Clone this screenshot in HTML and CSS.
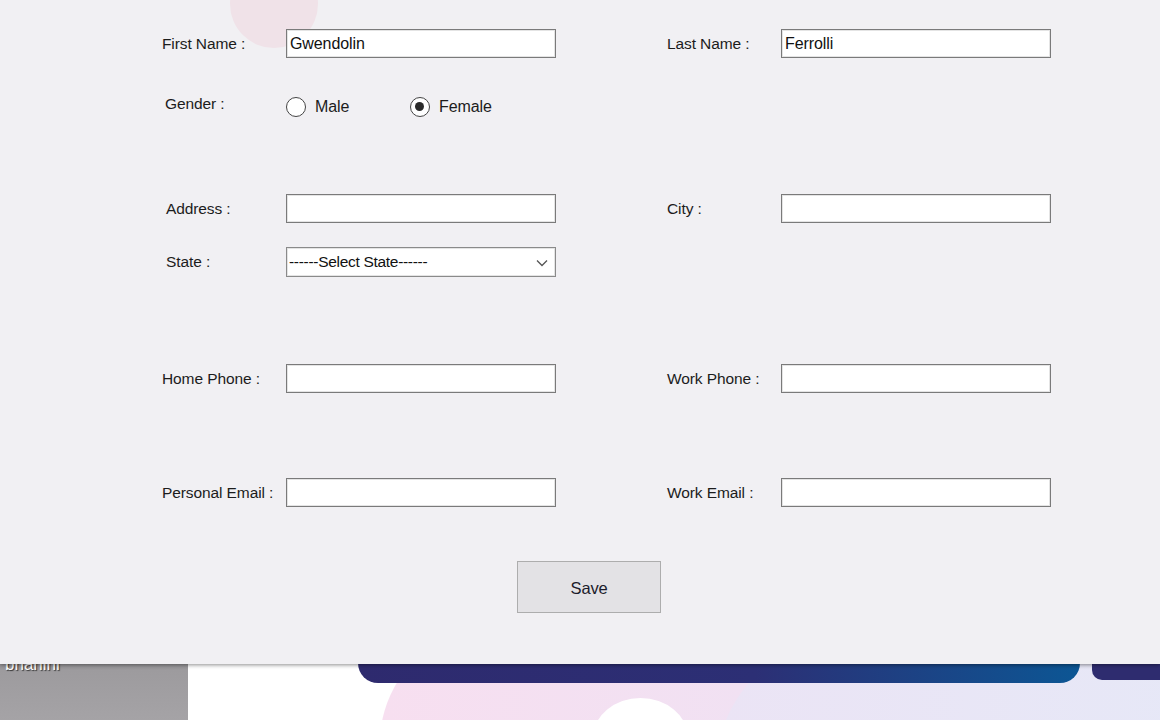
FILE: index.html
```html
<!DOCTYPE html>
<html>
<head>
<meta charset="utf-8">
<link rel="stylesheet" href="styles.css">
</head>
<body>
<div class="screen">
  <div class="backdrop">
    <div class="side"><span class="side-text">bhanini</span></div>
    <div class="canvas">
      <div class="wave wave-a"></div>
      <div class="wave wave-b"></div>
      <div class="wave wave-c"></div>
      <div class="bar"></div>
      <div class="bar2"></div>
    </div>
  </div>
  <div class="panel">
    <div class="blob"></div>
    <div class="row r1">
      <label class="lbl">First Name :</label>
      <div class="field">Gwendolin</div>
      <span></span>
      <label class="lbl">Last Name :</label>
      <div class="field">Ferrolli</div>
    </div>
    <div class="row r2">
      <label class="lbl ind3">Gender :</label>
      <div class="radios">
        <span class="radio"><span class="dot"></span>Male</span>
        <span class="radio on"><span class="dot"></span>Female</span>
      </div>
    </div>
    <div class="row r3">
      <label class="lbl ind4">Address :</label>
      <div class="field"></div>
      <span></span>
      <label class="lbl">City :</label>
      <div class="field"></div>
    </div>
    <div class="row r4">
      <label class="lbl ind4">State :</label>
      <div class="field select">------Select State------
        <svg class="chev" width="12" height="8" viewBox="0 0 12 8"><path d="M1 1.5 L6 6.5 L11 1.5" fill="none" stroke="#555" stroke-width="1.3"/></svg>
      </div>
    </div>
    <div class="row r5">
      <label class="lbl">Home Phone :</label>
      <div class="field"></div>
      <span></span>
      <label class="lbl">Work Phone :</label>
      <div class="field"></div>
    </div>
    <div class="row r6">
      <label class="lbl">Personal Email :</label>
      <div class="field"></div>
      <span></span>
      <label class="lbl">Work Email :</label>
      <div class="field"></div>
    </div>
    <div class="actions">
      <button class="save">Save</button>
    </div>
  </div>
</div>
</body>
</html>
```
FILE: styles.css
```css
* { box-sizing: border-box; }
html, body { margin: 0; padding: 0; }
body {
  width: 1160px;
  height: 720px;
  overflow: hidden;
  font-family: "Liberation Sans", Arial, sans-serif;
  background: #fff;
}
.screen { position: relative; width: 1160px; height: 720px; }

.panel {
  position: relative;
  z-index: 2;
  height: 664px;
  background: #f1f0f3;
  padding-top: 29px;
  box-shadow: 0 1px 4px rgba(0,0,0,0.45);
  overflow: hidden;
}
.blob {
  position: absolute;
  left: 230px;
  top: -40px;
  width: 88px;
  height: 88px;
  border-radius: 50%;
  background: #f0e2e8;
}
.row {
  position: relative;
  display: grid;
  grid-template-columns: 124px 270px 111px 114px 270px;
  margin-left: 162px;
  align-items: center;
  height: 29px;
}
.r2 { margin-top: 34px; }
.r3 { margin-top: 73px; }
.r4 { margin-top: 24px; height: 30px; }
.r5 { margin-top: 87px; }
.r6 { margin-top: 85px; }

.lbl {
  font-size: 15.5px;
  color: #1c1c1c;
  letter-spacing: -0.1px;
  white-space: nowrap;
}
.ind3 { padding-left: 3px; margin-top: -5px; }
.ind4 { padding-left: 4px; }

.field {
  height: 100%;
  background: #fff;
  border: 1px solid #7a7a7a;
  box-shadow: inset 0 0 0 1px #e4e4e4;
  font-size: 16px;
  letter-spacing: -0.1px;
  color: #111;
  padding-left: 3px;
  display: flex;
  align-items: center;
}
.select {
  position: relative;
  border-color: #8a8a8a;
  padding-left: 2px;
  font-size: 15.5px;
  letter-spacing: -0.3px;
}
.chev { position: absolute; right: 7px; top: 11px; }

.radios {
  display: flex;
  grid-column: 2 / 4;
  font-size: 16px;
  color: #1c1c1c;
  letter-spacing: -0.1px;
}
.radio { display: flex; align-items: center; width: 124px; }
.dot {
  width: 20px;
  height: 20px;
  border-radius: 50%;
  border: 1.5px solid #444;
  background: #fff;
  margin-right: 9px;
  position: relative;
}
.radio.on .dot::after {
  content: "";
  position: absolute;
  left: 4px;
  top: 4px;
  width: 9px;
  height: 9px;
  border-radius: 50%;
  background: #2a2a2a;
}

.actions { display: flex; margin-top: 54px; padding-left: 517px; }
.save {
  width: 144px;
  height: 52px;
  background: #e3e2e5;
  border: 1px solid #adadad;
  font-family: "Liberation Sans", Arial, sans-serif;
  font-size: 16.5px;
  color: #1c1c2c;
  letter-spacing: -0.2px;
  padding: 3px 0 0 0;
}

.backdrop {
  position: absolute;
  left: 0; top: 0;
  width: 1160px; height: 720px;
  display: flex;
  z-index: 1;
}
.side {
  width: 188px;
  height: 720px;
  background: linear-gradient(#8f8d90 655px, #9d9b9e 670px, #a5a3a6 720px);
  position: relative;
}
.side-text {
  position: absolute;
  left: 5px;
  top: 655px;
  font-size: 17px;
  color: #fff;
  text-shadow: 1px 1px 1px #333;
}
.canvas {
  position: relative;
  flex: 1;
  background: #fff;
  overflow: hidden;
}
.wave {
  position: absolute;
  border-radius: 50%;
}
.wave-a {
  left: 192px; top: 580px;
  width: 540px; height: 360px;
  background: linear-gradient(90deg, #f7dff0, #eee2f4);
  border-radius: 45% 45% 50% 50%;
}
.wave-b {
  left: 530px; top: 600px;
  width: 500px; height: 320px;
  background: linear-gradient(90deg, #ebe4f5, #e6e8f7);
}
.wave-c {
  left: 405px; top: 698px;
  width: 95px; height: 80px;
  background: #fff;
}
.bar {
  position: absolute;
  left: 170px;
  top: 640px;
  width: 722px;
  height: 43px;
  border-radius: 0 0 20px 20px;
  background: linear-gradient(90deg, #2e2a6e 0%, #2c2f75 55%, #0c5694 100%);
}
.bar2 {
  position: absolute;
  left: 904px;
  top: 640px;
  width: 80px;
  height: 40px;
  border-radius: 0 0 0 10px;
  background: #2e2c6f;
}
```
